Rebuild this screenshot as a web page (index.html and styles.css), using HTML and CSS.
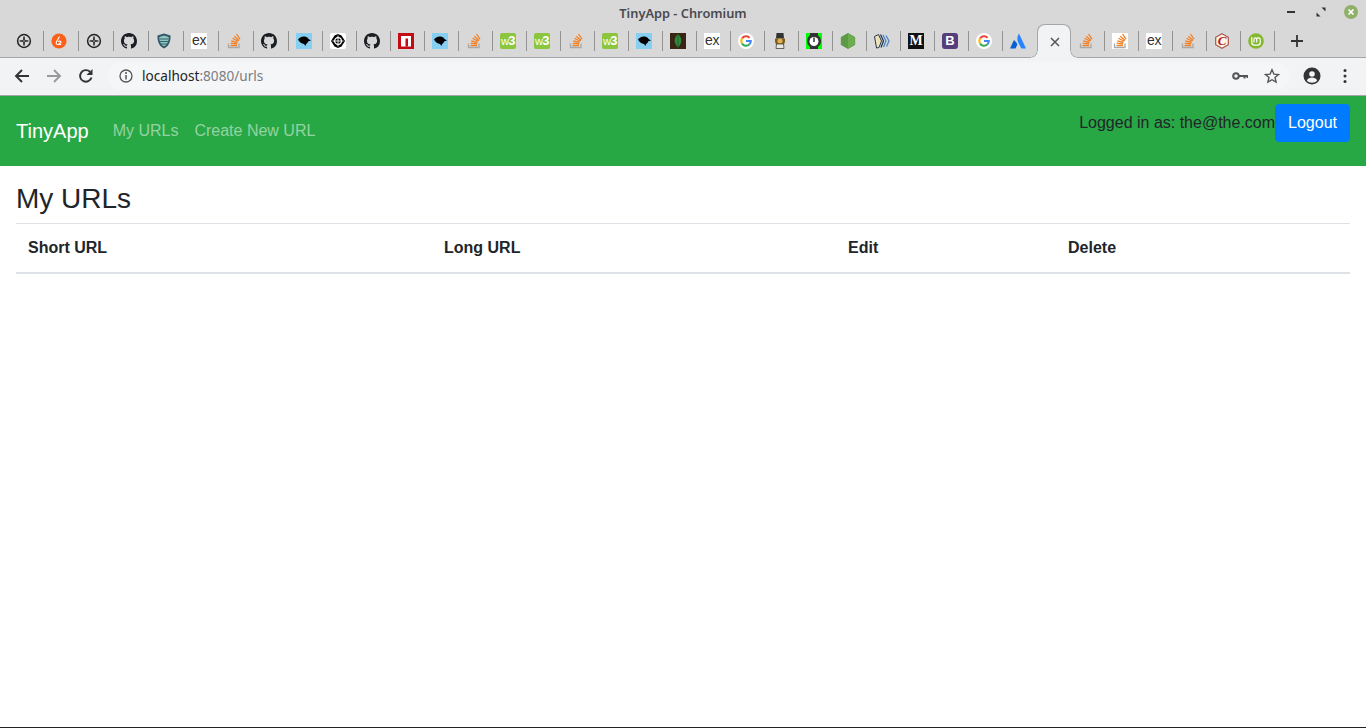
FILE: index.html
```html
<!DOCTYPE html>
<html lang="en">
<head>
    <meta charset="utf-8" />
    <title>TinyApp</title>
    <link rel="stylesheet" href="styles.css">
</head>
<body>
    <svg class="sprites" width="0" height="0">
        <symbol id="i-globe" viewBox="0 0 16 16">
            <circle cx="8" cy="8" r="6.4" fill="none" stroke="#222" stroke-width="1.5"/>
            <path d="M8 3.6v8.8M3.6 8h8.800" stroke="#333" stroke-width="1.6"/>
            <path d="M8 5 9 7 11 8 9 9 8 11 7 9 5 8 7 7z" fill="#333"/>
            <circle cx="8" cy="8" r=".7" fill="#ddd"/>
        </symbol>
        <symbol id="i-brave" viewBox="0 0 16 16">
            <circle cx="8" cy="8" r="7.6" fill="#f9601c"/>
            <path d="M8.5 3.5 5.4 9c-.7 1.3.2 2.5 1.500 2.500h3.300M7.300 8.700c.7-1 2.700-.8 2.700.5 0 1.200-1.500 1.500-2.200.8" fill="none" stroke="#fff" stroke-width="1.1"/>
        </symbol>
        <symbol id="i-github" viewBox="0 0 16 16">
            <path fill="#1b1f23" d="M8 0C3.58 0 0 3.58 0 8c0 3.54 2.29 6.53 5.47 7.59.4.07.55-.17.55-.38 0-.19-.01-.82-.01-1.49-2.01.37-2.53-.49-2.69-.94-.09-.23-.48-.94-.82-1.13-.28-.15-.68-.52-.01-.53.63-.01 1.08.58 1.23.82.72 1.21 1.87.87 2.33.66.07-.52.28-.87.51-1.07-1.78-.2-3.64-.89-3.64-3.95 0-.87.31-1.59.82-2.15-.08-.2-.36-1.02.08-2.12 0 0 .67-.21 2.2.82.64-.18 1.32-.27 2-.27.68 0 1.36.09 2 .27 1.53-1.04 2.2-.82 2.2-.82.44 1.1.16 1.92.08 2.12.51.56.82 1.27.82 2.15 0 3.07-1.87 3.75-3.65 3.95.29.25.54.73.54 1.48 0 1.07-.01 1.93-.01 2.2 0 .21.15.46.55.38A8.013 8.013 0 0 0 16 8c0-4.42-3.58-8-8-8z"/>
        </symbol>
        <symbol id="i-shield" viewBox="0 0 16 16">
            <path d="M8 .5 14.5 2.500C14.800 9 12.500 13.300 8 15.500 3.500 13.300 1.200 9 1.500 2.500z" fill="#2f5566"/>
            <path d="M8 2.500 12.700 4C12.800 8.500 11.200 11.800 8 13.500 4.800 11.800 3.200 8.500 3.300 4z" fill="#8fc6bd"/>
            <path d="M4 6h8M4 8.500h8M5 11h6" stroke="#2f5566" stroke-width=".9"/>
        </symbol>
        <symbol id="i-so" viewBox="0 0 16 16">
            <path d="M2.500 10.500V14.500H13V10.500" fill="none" stroke="#a8a8a8" stroke-width="1.3"/>
            <path d="M4.500 12.500H11M4.700 10.200l6.400.6M5.300 7.800l6.200 1.700M6.500 5.300l5.600 3M8.300 3.200l4.800 4.200M10.500 1l3.500 5.200" fill="none" stroke="#f48024" stroke-width="1.3"/>
        </symbol>
        <symbol id="i-bird" viewBox="0 0 16 16">
            <rect width="16" height="16" fill="#86cff0"/>
            <path d="M2 6.500C3 4.500 6 3 9 3.500 11 3.800 12 5 12.500 6L15 7.500 12.300 8.300C12 9.500 11 10.500 10 11.300L9.500 13 8 11C5.500 10.500 3.500 9 3 8z" fill="#000"/>
        </symbol>
        <symbol id="i-pen" viewBox="0 0 16 16">
            <rect width="16" height="16" rx="2" fill="#fff"/>
            <path d="M8 1 11.500 2.500 15 8 11.500 13.500 8 15 4.500 13.500 1 8 4.500 2.500z" fill="#000"/>
            <circle cx="8" cy="8" r="3.4" fill="none" stroke="#fff" stroke-width="1.2"/>
            <path d="M8 2.500v11M2.500 8h11" stroke="#fff" stroke-width=".9"/>
        </symbol>
        <symbol id="i-npm" viewBox="0 0 16 16">
            <rect width="16" height="16" fill="#c40b13"/>
            <rect x="3" y="3" width="10" height="10.500" fill="#fff"/>
            <rect x="7.500" y="5.500" width="2.500" height="8" fill="#c40b13"/>
        </symbol>
        <symbol id="i-leaf" viewBox="0 0 16 16">
            <rect width="16" height="16" fill="#3a2414"/>
            <path d="M8 1C12 4.500 12.800 9.500 8 14.500 3.200 9.500 4 4.500 8 1z" fill="#2f8a3c"/>
            <path d="M8 1v14" stroke="#1b4f22" stroke-width=".7"/>
        </symbol>
        <symbol id="i-google" viewBox="0 0 16 16">
            <circle cx="8" cy="8" r="8" fill="#fff"/>
            <g fill="none" stroke-width="2">
                <path d="M11.600 4.800A4.800 4.800 0 0 0 4.100 5.400" stroke="#ea4335"/>
                <path d="M4.100 5.400a4.800 4.800 0 0 0 0 5.200" stroke="#fbbc05"/>
                <path d="M4.100 10.600a4.800 4.800 0 0 0 7.200 1" stroke="#34a853"/>
                <path d="M11.300 11.600A4.800 4.800 0 0 0 12.800 8H8" stroke="#4285f4"/>
            </g>
        </symbol>
        <symbol id="i-lady" viewBox="0 0 16 16">
            <path d="M4.500 0h7l.5 5.500H4z" fill="#333"/>
            <path d="M3 5.500h10v3l-1 3H4l-1-3z" fill="#7d5a1e"/>
            <circle cx="8" cy="8" r="2.600" fill="#e0b050"/>
            <path d="M4.500 11h7l.5 4.500H4z" fill="#e8e8e0" stroke="#444" stroke-width=".8"/>
        </symbol>
        <symbol id="i-clock" viewBox="0 0 16 16">
            <rect width="16" height="16" fill="#0f0"/>
            <rect x="4" width="8" height="16" fill="#333"/>
            <circle cx="8" cy="8" r="7" fill="#333"/>
            <circle cx="8" cy="8.500" r="4.500" fill="#fff"/>
            <path d="M8 4.500v4.500" stroke="#333" stroke-width="1.5"/>
        </symbol>
        <symbol id="i-node" viewBox="0 0 16 16">
            <path d="M8 .5 14.700 4.300v7.400L8 15.500 1.300 11.700V4.300z" fill="#5d9a45" stroke="#5d9a45" stroke-linejoin="round"/>
            <path d="M8 .5 14.700 4.300v7.400L8 15.500z" fill="#6cad4f"/>
        </symbol>
        <symbol id="i-pages" viewBox="0 0 16 16">
            <path d="M.5 3.500 4.500 1.500 7.500 8 5 14.500 2.500 15z" fill="#eee2b8" stroke="#26384f" stroke-width="1"/>
            <path d="M6.500 1.500 9.500 8 7 14.500" fill="none" stroke="#26384f" stroke-width="1.3"/>
            <path d="M9 2 12 8 9.500 14" fill="none" stroke="#4c86c9" stroke-width="1.3"/>
            <path d="M12 2.500 15 8 12.500 13.500" fill="none" stroke="#4c86c9" stroke-width="1.3"/>
        </symbol>
        <symbol id="i-atlassian" viewBox="0 0 16 16">
            <path d="M9 .5C7 3.500 6.800 6.500 8.300 9.500L11.300 15.500H16z" fill="#2684ff"/>
            <path d="M4.600 7.500C4.300 7.100 3.900 7.200 3.700 7.600L0 15.500H5.500L7.200 12C7.600 10.500 6 9.200 4.600 7.500z" fill="#0a5fd6"/>
        </symbol>
        <symbol id="i-cert" viewBox="0 0 16 16">
            <path d="M8 .7 14.300 4.300v7.400L8 15.300 1.700 11.700V4.300z" fill="#fdf4ea" stroke="#a9574a" stroke-width="1.2"/>
        </symbol>
        <symbol id="i-mint" viewBox="0 0 16 16">
            <circle cx="8" cy="8" r="7.8" fill="#84b82f"/>
            <path d="M3.800 4v5.500c0 1.700 1.100 2.700 2.700 2.700h3c1.600 0 2.700-1 2.700-2.700V6.500c0-2-2.800-2-3.500-.5C8 4.500 6 4.500 6 6.500V9.500M8.700 6V9.500" fill="none" stroke="#fff" stroke-width="1.2"/>
        </symbol>
    </svg>

    <header class="browser">
        <div class="titlebar">
            <span class="window-title">TinyApp - Chromium</span>
            <div class="window-btns">
                <svg class="win-btn" viewBox="0 0 14 14"><path d="M3 7h8" stroke="#333" stroke-width="2"/></svg>
                <svg class="win-btn" viewBox="0 0 14 14"><path d="M2.500 11.500v-4l4 4zM11.500 2.500v4l-4-4z" fill="#333"/></svg>
                <svg class="win-btn" viewBox="0 0 14 14"><circle cx="7" cy="7" r="7" fill="#8fb069"/><path d="M4.500 4.500l5 5M9.500 4.500l-5 5" stroke="#fff" stroke-width="1.7"/></svg>
            </div>
        </div>
        <div class="tabstrip">
            <div class="tab wide"><svg class="fav"><use href="#i-globe"/></svg></div>
            <div class="tab wide"><svg class="fav"><use href="#i-brave"/></svg></div>
            <div class="tab wide"><svg class="fav"><use href="#i-globe"/></svg></div>
            <div class="tab wide"><svg class="fav"><use href="#i-github"/></svg></div>
            <div class="tab wide"><svg class="fav"><use href="#i-shield"/></svg></div>
            <div class="tab wide"><span class="fav ex">ex</span></div>
            <div class="tab wide"><svg class="fav"><use href="#i-so"/></svg></div>
            <div class="tab wide"><svg class="fav"><use href="#i-github"/></svg></div>
            <div class="tab"><svg class="fav"><use href="#i-bird"/></svg></div>
            <div class="tab"><svg class="fav"><use href="#i-pen"/></svg></div>
            <div class="tab"><svg class="fav"><use href="#i-github"/></svg></div>
            <div class="tab"><svg class="fav"><use href="#i-npm"/></svg></div>
            <div class="tab"><svg class="fav"><use href="#i-bird"/></svg></div>
            <div class="tab"><svg class="fav"><use href="#i-so"/></svg></div>
            <div class="tab"><span class="fav w3">w<b>3</b></span></div>
            <div class="tab"><span class="fav w3">w<b>3</b></span></div>
            <div class="tab"><svg class="fav"><use href="#i-so"/></svg></div>
            <div class="tab"><span class="fav w3">w<b>3</b></span></div>
            <div class="tab"><svg class="fav"><use href="#i-bird"/></svg></div>
            <div class="tab"><svg class="fav"><use href="#i-leaf"/></svg></div>
            <div class="tab"><span class="fav ex">ex</span></div>
            <div class="tab"><svg class="fav"><use href="#i-google"/></svg></div>
            <div class="tab"><svg class="fav"><use href="#i-lady"/></svg></div>
            <div class="tab"><svg class="fav"><use href="#i-clock"/></svg></div>
            <div class="tab"><svg class="fav"><use href="#i-node"/></svg></div>
            <div class="tab"><svg class="fav"><use href="#i-pages"/></svg></div>
            <div class="tab"><span class="fav medium">M</span></div>
            <div class="tab"><span class="fav bs">B</span></div>
            <div class="tab"><svg class="fav"><use href="#i-google"/></svg></div>
            <div class="tab before-active"><svg class="fav"><use href="#i-atlassian"/></svg></div>
            <div class="tab-active">
                <svg class="tab-close" viewBox="0 0 10 10"><path d="M1 1l8 8M9 1l-8 8" stroke="#555" stroke-width="1.5"/></svg>
            </div>
            <div class="tab"><svg class="fav"><use href="#i-so"/></svg></div>
            <div class="tab"><svg class="fav so-white"><use href="#i-so"/></svg></div>
            <div class="tab"><span class="fav ex">ex</span></div>
            <div class="tab"><svg class="fav"><use href="#i-so"/></svg></div>
            <div class="tab"><span class="fav cert"><svg class="cert-bg"><use href="#i-cert"/></svg><span class="cert-letter">C</span></span></div>
            <div class="tab"><svg class="fav"><use href="#i-mint"/></svg></div>
            <svg class="new-tab" viewBox="0 0 12 12"><path d="M6 0v12M0 6h12" stroke="#333" stroke-width="1.8"/></svg>
        </div>
        <div class="toolbar">
            <svg class="tool" viewBox="0 0 16 16"><path d="M15 8H2M8 2 2 8l6 6" fill="none" stroke="#333" stroke-width="1.9"/></svg>
            <svg class="tool" viewBox="0 0 16 16"><path d="M1 8h13M8 2l6 6-6 6" fill="none" stroke="#999" stroke-width="1.9"/></svg>
            <svg class="tool" viewBox="0 0 16 16"><path d="M13.500 9.500A5.800 5.800 0 1 1 12 3.800" fill="none" stroke="#333" stroke-width="1.9"/><path d="M14.500 1v6h-6z" fill="#333"/></svg>
            <div class="omnibox">
                <svg class="info" viewBox="0 0 14 14"><circle cx="7" cy="7" r="6" fill="none" stroke="#555" stroke-width="1.3"/><path d="M7 6v4.500" stroke="#555" stroke-width="1.5"/><circle cx="7" cy="4" r="1" fill="#555"/></svg>
                <span class="url"><span class="host">localhost</span>:8080/urls</span>
                <svg class="key" viewBox="0 0 16 10"><circle cx="4" cy="5" r="2.800" fill="none" stroke="#555" stroke-width="2"/><path d="M6.500 5H15.500V7M12.500 5v2.500" fill="none" stroke="#555" stroke-width="2"/></svg>
                <svg class="star" viewBox="0 0 16 16"><path d="M8 1.800l1.900 4.300 4.600.4-3.500 3 1.100 4.600L8 11.700l-4.100 2.400L5 9.500l-3.500-3 4.600-.4z" fill="none" stroke="#555" stroke-width="1.4"/></svg>
            </div>
            <svg class="avatar" viewBox="0 0 18 18"><circle cx="9" cy="9" r="8.500" fill="#333"/><circle cx="9" cy="7" r="2.800" fill="#f1f3f4"/><path d="M3.800 13.500c1-2.200 3.200-3 5.200-3s4.200.8 5.200 3C13 15 11 15.700 9 15.700S5 15 3.800 13.500z" fill="#f1f3f4"/></svg>
            <svg class="menu" viewBox="0 0 4 16"><circle cx="2" cy="2.500" r="1.500" fill="#333"/><circle cx="2" cy="8" r="1.500" fill="#333"/><circle cx="2" cy="13.500" r="1.500" fill="#333"/></svg>
        </div>
    </header>

    <nav class="navbar">
        <a class="brand" href="#">TinyApp</a>
        <ul class="nav-links">
            <li><a href="#">My URLs</a></li>
            <li><a href="#">Create New URL</a></li>
        </ul>
        <form class="user-form">
            <span class="logged-in">Logged in as: the@the.com</span>
            <button class="btn-logout" type="button">Logout</button>
        </form>
    </nav>

    <main class="content">
        <h3>My URLs</h3>
        <table class="urls">
            <thead>
                <tr>
                    <th class="col-short">Short URL</th>
                    <th class="col-long">Long URL</th>
                    <th class="col-edit">Edit</th>
                    <th>Delete</th>
                </tr>
            </thead>
            <tbody></tbody>
        </table>
    </main>
</body>
</html>
```

FILE: styles.css
```css
* {
    box-sizing: border-box;
}

html, body {
    height: 100%;
    margin: 0;
    overflow: hidden;
}

body {
    display: flex;
    flex-direction: column;
    background-color: #fff;
    color: #212529;
    font-family: "Liberation Sans", Arial, sans-serif;
    font-size: 16px;
    line-height: 1.5;
    border-bottom: 1px solid #222;
}

.sprites {
    display: none;
}

/* browser frame */
.browser {
    background-color: #d8d8d8;
}

.titlebar {
    display: flex;
    justify-content: center;
    align-items: center;
    height: 24px;
    padding-top: 3px;
    position: relative;
}

.window-title {
    color: #4a4a4f;
    font-family: "Noto Sans", sans-serif;
    font-size: 12.8px;
    font-weight: 600;
}

.window-btns {
    position: absolute;
    right: 8px;
    top: 5px;
    display: flex;
    gap: 16px;
}

.win-btn {
    width: 14px;
    height: 14px;
}

.tabstrip {
    display: flex;
    align-items: flex-start;
    height: 34px;
    padding-top: 7px;
    padding-left: 9px;
    border-bottom: 1px solid #a6a6a6;
}

.tab {
    display: flex;
    align-items: center;
    width: 34px;
    height: 20px;
    padding-left: 7px;
    border-right: 1px solid #939393;
}

.tab.wide {
    width: 35px;
}

.fav {
    display: block;
    flex: none;
    width: 16px;
    height: 16px;
}

.ex {
    background-color: #fff;
    color: #333;
    font-size: 14px;
    line-height: 15px;
    text-align: center;
    letter-spacing: -0.3px;
}

.w3 {
    background-color: #8cc63f;
    border-radius: 2px;
    color: #fff;
    font-size: 11px;
    line-height: 16px;
    text-align: center;
    letter-spacing: -0.5px;
    white-space: nowrap;
}

.w3 b {
    font-size: 13px;
}

.medium {
    background-color: #111;
    color: #fff;
    font-family: "Liberation Serif", serif;
    font-size: 14px;
    font-weight: bold;
    line-height: 16px;
    text-align: center;
}

.bs {
    background-color: #563d7c;
    border-radius: 3px;
    color: #fff;
    font-size: 13px;
    font-weight: bold;
    line-height: 16px;
    text-align: center;
}

.so-white {
    background-color: #fff;
}

.cert {
    position: relative;
}

.cert-bg {
    display: block;
    width: 16px;
    height: 16px;
}

.cert-letter {
    position: absolute;
    top: 0;
    left: 0;
    width: 16px;
    color: #b31c1c;
    font-family: "Liberation Serif", serif;
    font-size: 13px;
    font-style: italic;
    font-weight: bold;
    line-height: 16px;
    text-align: center;
}

.tab.before-active {
    border-right: none;
}

.tab-active {
    position: relative;
    display: flex;
    justify-content: center;
    align-items: center;
    width: 34px;
    height: 34px;
    margin-top: -7px;
    background-color: #f1f3f4;
    border: 1px solid #a6a6a6;
    border-bottom: none;
    border-radius: 8px 8px 0 0;
}

.tab-active::before,
.tab-active::after {
    content: "";
    position: absolute;
    bottom: 0;
    width: 7px;
    height: 7px;
}

.tab-active::before {
    left: -7px;
    background: radial-gradient(circle at 0 0, transparent 5.5px, #a6a6a6 6px, #f1f3f4 7px);
}

.tab-active::after {
    right: -7px;
    background: radial-gradient(circle at 100% 0, transparent 5.5px, #a6a6a6 6px, #f1f3f4 7px);
}

.tab-close {
    width: 10px;
    height: 10px;
    margin-left: 1px;
}

.new-tab {
    width: 12px;
    height: 12px;
    margin: 4px 0 0 16px;
}

.toolbar {
    display: flex;
    align-items: center;
    height: 38px;
    padding: 0 19px 1px 14px;
    background-color: #f1f3f4;
    border-bottom: 1px solid #a6a6a6;
}

.tool {
    width: 16px;
    height: 16px;
    margin-right: 16px;
    flex: none;
}

.omnibox {
    display: flex;
    align-items: center;
    flex: 1;
    height: 28px;
    margin-left: -2px;
    padding: 0 10px 0 11px;
    background-color: #f5f6f7;
    border-radius: 14px;
}

.info {
    width: 14px;
    height: 14px;
    margin-right: 9px;
}

.url {
    flex: 1;
    color: #7a7d80;
    font-family: "Noto Sans", sans-serif;
    font-size: 13.6px;
}

.host {
    color: #222;
}

.key {
    width: 16px;
    height: 10px;
    margin-right: 16px;
}

.star {
    width: 16px;
    height: 16px;
}

.avatar {
    width: 18px;
    height: 18px;
    margin: 0 0 0 13px;
    flex: none;
}

.menu {
    width: 4px;
    height: 16px;
    margin-left: 22px;
    flex: none;
}

/* page */
.navbar {
    display: flex;
    align-items: center;
    padding: 8px 16px;
    background-color: #28a745;
}

.brand {
    margin-right: 16px;
    color: #fff;
    font-size: 20px;
    text-decoration: none;
}

.nav-links {
    display: flex;
    flex: 1;
    margin: 0;
    padding: 0;
    list-style: none;
}

.nav-links a {
    display: block;
    padding: 8px;
    color: rgba(255, 255, 255, .5);
    text-decoration: none;
}

.user-form {
    display: flex;
    align-items: center;
    margin-bottom: 16px;
}

.btn-logout {
    height: 38px;
    padding: 6px 12px;
    background-color: #007bff;
    border: 1px solid #007bff;
    border-radius: 4px;
    color: #fff;
    font-family: inherit;
    font-size: 16px;
}

.content {
    padding: 16px;
}

h3 {
    margin: 0 0 7px;
    font-size: 28px;
    font-weight: 500;
    line-height: 1.2;
}

.urls {
    width: 100%;
    border-collapse: collapse;
    table-layout: fixed;
}

.urls th {
    padding: 12px;
    border-top: 1px solid #dee2e6;
    border-bottom: 2px solid #dee2e6;
    text-align: left;
}

.col-short {
    width: 416px;
}

.col-long {
    width: 404px;
}

.col-edit {
    width: 220px;
}
```
